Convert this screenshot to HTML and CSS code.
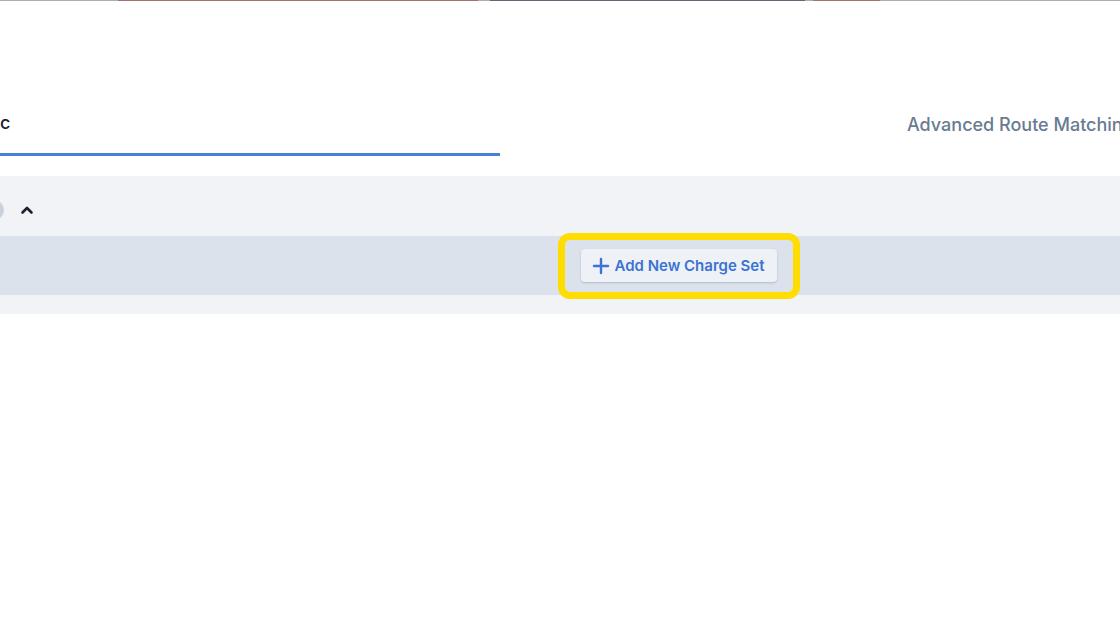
FILE: index.html
```html
<!DOCTYPE html>
<html>
<head>
<meta charset="utf-8">
<link rel="stylesheet" href="styles.css">
</head>
<body>
<div class="topline">
  <span class="seg seg-gray" style="width:118px"></span>
  <span class="seg seg-red" style="width:360px"></span>
  <span class="seg seg-gray" style="width:12px"></span>
  <span class="seg seg-dark" style="width:315px"></span>
  <span class="seg seg-gray" style="width:8px"></span>
  <span class="seg seg-red" style="width:67px"></span>
  <span class="seg seg-gray" style="flex:1"></span>
</div>
<div class="tabs">
  <div class="tab tab-active"><span class="tab-label">c</span></div>
  <div class="tab tab-other"><span class="tab-label">Advanced Route Matching</span></div>
</div>
<div class="panel">
  <div class="panel-head">
    <span class="dot"></span>
    <svg class="chev" width="14" height="10" viewBox="0 0 14 10"><path d="M2.5 7.5 L7 3 L11.5 7.5" fill="none" stroke="#1a202c" stroke-width="2.6" stroke-linecap="round" stroke-linejoin="round"/></svg>
  </div>
  <div class="panel-bar">
    <div class="highlight">
      <button class="add-btn">
        <svg width="18" height="18" viewBox="0 0 18 18"><path d="M9 2 V16 M2 9 H16" stroke="#3a73d3" stroke-width="2.4" stroke-linecap="round"/></svg>
        <span>Add New Charge Set</span>
      </button>
    </div>
  </div>
  <div class="panel-foot"></div>
</div>
</body>
</html>
```

FILE: styles.css
```css
html, body {
  margin: 0;
  padding: 0;
  background: #ffffff;
  font-family: Inter, "Noto Sans", "Liberation Sans", sans-serif;
  overflow: hidden;
}

.topline {
  display: flex;
  height: 1px;
}
.seg { display: block; height: 1px; }
.seg-gray { background: #a7aeb6; }
.seg-red { background: #a4716f; }
.seg-dark { background: #5f6873; }

.tabs {
  display: flex;
  margin-top: 99px;
  height: 56px;
}
.tab {
  display: flex;
  align-items: center;
  box-sizing: border-box;
  height: 56px;
  padding-bottom: 8px;
}
.tab-active {
  width: 500px;
  border-bottom: 3px solid #4a7fd6;
}
.tab-active .tab-label {
  font-size: 18px;
  font-weight: 500;
  color: #1a202c;
}
.tab-other {
  flex: 1;
  padding-left: 407px;
  white-space: nowrap;
  overflow: hidden;
}
.tab-other .tab-label {
  font-size: 18px;
  font-weight: 500;
  color: #687b91;
}

.panel {
  margin-top: 20px;
  background: #f1f3f7;
}
.panel-head {
  height: 60px;
  box-sizing: border-box;
  padding-top: 8px;
  display: flex;
  align-items: center;
  gap: 16px;
}
.dot {
  width: 20px;
  height: 20px;
  border-radius: 50%;
  background: #c8d2dd;
  margin-left: -16px;
}
.chev { display: block; }

.panel-bar {
  height: 59px;
  background: #dbe2eb;
  display: flex;
  justify-content: center;
  align-items: center;
  padding-left: 238px;
}
.panel-foot { height: 19px; }

.highlight {
  box-sizing: border-box;
  width: 242px;
  height: 66px;
  border: 7px solid #ffdd00;
  border-radius: 12px;
  display: flex;
  align-items: center;
  justify-content: center;
}
.add-btn {
  display: flex;
  align-items: center;
  gap: 4px;
  height: 33px;
  padding: 0 12px 0 11px;
  background: #eef1f6;
  border: none;
  border-radius: 4px;
  box-shadow: 0 1px 2px rgba(30, 50, 80, 0.22);
  font-family: Inter, "Noto Sans", "Liberation Sans", sans-serif;
  font-size: 15px;
  font-weight: 600;
  color: #3a73d3;
  cursor: pointer;
}
.add-btn svg { display: block; }
```
